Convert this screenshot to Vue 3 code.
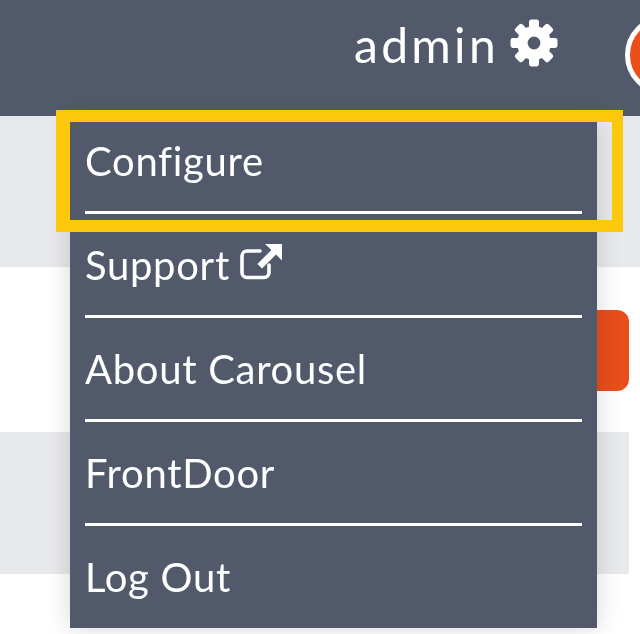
<script setup>
const items = ['Configure', 'Support', 'About Carousel', 'FrontDoor', 'Log Out']
const teeth = [0, 45, 90, 135, 180, 225, 270, 315]
</script>

<template>
  <div class="page">
    <header class="top">
      <span class="user">admin</span>
      <svg class="gear" viewBox="0 0 48 48" aria-hidden="true">
        <circle cx="24" cy="24" r="11.7" fill="none" stroke="#fff" stroke-width="10.6" />
        <rect v-for="a in teeth" :key="a" x="19" y="0.5" width="10" height="10" rx="2.4" fill="#fff" :transform="`rotate(${a} 24 24)`" />
      </svg>
      <span class="avatar"></span>
    </header>

    <section class="band gray tall"></section>
    <section class="band white mid"><span class="orange"></span></section>
    <section class="band gray inset"></section>

    <nav class="menu">
      <div v-for="(item, i) in items" :key="item" class="item" :class="{ last: i === items.length - 1 }">
        <span class="label">{{ item }}</span>
        <svg v-if="item === 'Support'" class="ext" viewBox="0 0 42 36" aria-hidden="true">
          <path d="M29 21v7.5a5 5 0 0 1-5 5H7a5 5 0 0 1-5-5V12a5 5 0 0 1 5-5h13" fill="none" stroke="#fff" stroke-width="3.6" stroke-linecap="round" />
          <path d="M25 0h17v16.5l-6-6-14 14-4.6-4.6 14-14z" fill="#fff" />
        </svg>
      </div>
    </nav>
    <div class="highlight"></div>
  </div>
</template>

<style scoped>
.page {
  position: relative;
  width: 640px;
  height: 634px;
  overflow: hidden;
  background: #fff;
  font-family: Lato, "Open Sans", sans-serif;
}
.top {
  height: 116px;
  box-sizing: border-box;
  background: #51596b;
  display: flex;
  align-items: flex-start;
  padding: 15px 0 0 354px;
  color: #fff;
}
.user {
  flex: none;
  width: 143px;
  font-size: 48px;
  line-height: 60px;
  letter-spacing: 3.3px;
  filter: blur(0.6px);
}
.gear {
  flex: none;
  width: 48px;
  height: 48px;
  margin: 4px 0 0 13px;
  filter: blur(0.5px);
}
.avatar {
  flex: none;
  width: 80px;
  height: 80px;
  margin: 0 0 0 67px;
  box-sizing: border-box;
  border-radius: 50%;
  border: 5px solid #fff;
  background: #e94e1b;
}
.band { width: 629px; }
.gray { background: #e8e9eb; }
.tall { width: 640px; height: 151px; }
.mid {
  height: 165px;
  display: flex;
  justify-content: flex-end;
  align-items: flex-start;
  padding-top: 43px;
  box-sizing: border-box;
}
.inset { height: 142px; }
.orange {
  width: 60px;
  height: 81px;
  border-radius: 12px;
  background: #e94e1b;
}
.menu {
  position: absolute;
  left: 70px;
  top: 122px;
  width: 527px;
  height: 506px;
  box-sizing: border-box;
  padding: 0 15px;
  background: #51596b;
  box-shadow: 0 0 24px rgba(0, 0, 0, 0.16);
  color: #fff;
}
.item {
  height: 104px;
  box-sizing: border-box;
  border-bottom: 3px solid #fff;
  display: flex;
  align-items: flex-start;
  font-size: 40px;
  line-height: 46px;
  letter-spacing: 0.7px;
  padding-top: 28px;
}
.item:first-child { height: 92px; padding-top: 16px; }
.label { filter: blur(0.6px); }
.item.last { border-bottom: 0; }
.ext {
  flex: none;
  width: 42px;
  height: 36px;
  margin: 2px 0 0 10px;
  filter: blur(0.5px);
}
.highlight {
  position: absolute;
  left: 56px;
  top: 110px;
  width: 567px;
  height: 122px;
  box-sizing: border-box;
  border: solid #fdc70c;
  border-width: 12px 11px 12px 14px;
}
</style>
